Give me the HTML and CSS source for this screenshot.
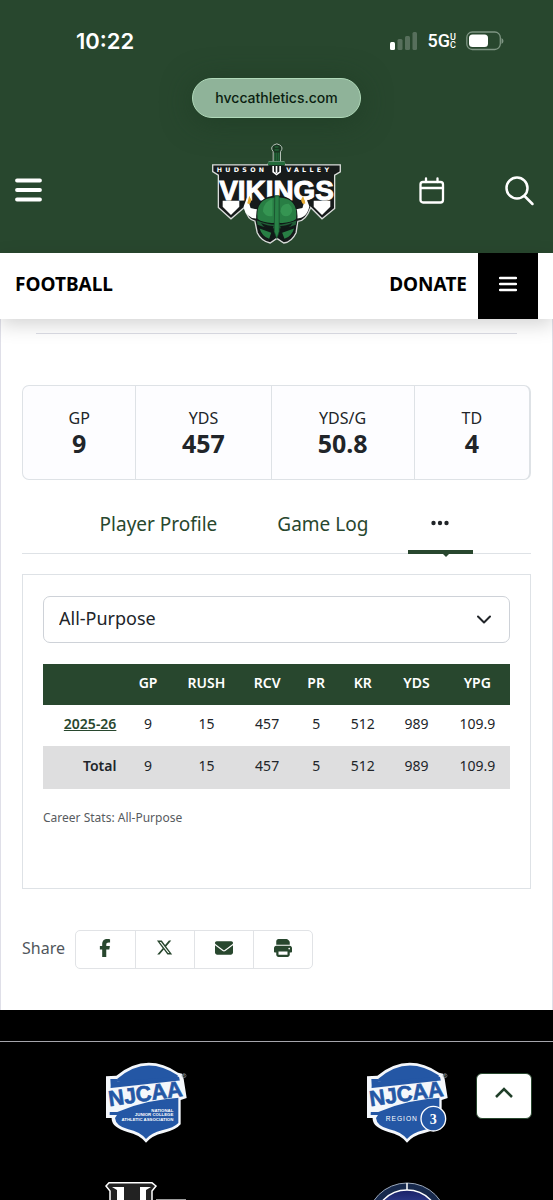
FILE: index.html
```html
<!DOCTYPE html>
<html lang="en">
<head>
<meta charset="utf-8">
<meta name="viewport" content="width=device-width, initial-scale=1">
<title>Football - Hudson Valley Vikings</title>
<link rel="stylesheet" href="styles.css">
</head>
<body>
<header class="site-header">
  <div class="status">
    <span class="time">10:22</span>
    <div class="status-icons">
      <svg width="28" height="18" viewBox="0 0 28 18" fill="#fff"><rect x="0" y="10" width="5" height="8" rx="1.5"/><g opacity=".22"><rect x="7.500" y="7" width="5" height="11" rx="1.500"/><rect x="15" y="4" width="5" height="14" rx="1.500"/><rect x="22.500" y="0" width="4.500" height="18" rx="1.500"/></g></svg>
      <span class="network">5G<span class="uc"><span>U</span><span>C</span></span></span>
      <svg width="38" height="20" viewBox="0 0 38 20"><rect x=".8" y="1" width="33.500" height="17.500" rx="5.500" fill="none" stroke="#7e9583" stroke-width="1.300"/><rect x="3" y="3.500" width="19" height="12.500" rx="3.500" fill="#fff"/><path d="M35.500 7v6q2-.8 2-3t-2-3" fill="#7e9583"/></svg>
    </div>
  </div>
  <div class="address">hvccathletics.com</div>
  <div class="nav">
    <button class="icon-btn" aria-label="Menu"><svg width="28" height="25" viewBox="0 0 28 25"><path d="M2 2.500H25M2 12H25M2 21.500H25" stroke="#fff" stroke-width="3.800" stroke-linecap="round"/></svg></button>
    <a class="logo" href="#" aria-label="Hudson Valley Vikings">
      <svg width="129" height="101" viewBox="36 22 388 304">
        <path d="M220 90V48q-10-12 2-20 9-7 18 0 12 8 2 20V90Z" fill="#183520" stroke="#b9c4bb" stroke-width="3"/>
        <path d="M225 34H236M224 43H237M225 51V76M231 51V76M237 51V76" stroke="#287a43" stroke-width="3"/>
        <path d="M38 88H204L208 79H252L256 88H422V109L405 119V219L367 250L333 216Q318 257 294 258L289 292Q276 320 252 323L231 309L211 323Q184 317 172 292L165 257Q143 254 133 216L93 250L55 216V119L38 108Z" fill="#171b1b" stroke="#d9dcda" stroke-width="4"/>
        <path d="M205 78H255L256 89H204Z" fill="#236b3b"/>
        <text x="50" y="109" class="logo-city">HUDSON</text><text x="259" y="109" class="logo-city">VALLEY</text>
        <path d="M220 91V109L230 117L241 109V91M230 91V112" fill="none" stroke="#fff" stroke-width="5"/>
        <path d="M68 196H118V214L93 239L68 214ZM342 196H392V214L367 239L342 214Z" fill="#fff"/>
        <path d="M142 184L131 213Q138 249 170 249L181 224L152 218ZM318 184L329 213Q321 249 290 249L279 224L308 218Z" fill="#fff"/>
        <text x="230" y="193" text-anchor="middle" class="logo-name">VIKINGS</text>
        <path d="M148 181L142 203Q152 211 154 193ZM310 181L317 203Q307 211 304 193Z" fill="#e9ae34"/>
        <path d="M170 260Q160 183 231 180Q302 183 292 260L283 291L249 317L231 304L211 317L178 291Z" fill="#101817"/>
        <path d="M173 251Q165 188 225 186V262Q194 265 173 251M237 186Q297 188 289 251Q270 265 237 262Z" fill="#287e44"/>
        <path d="M218 190Q190 199 189 228Q202 248 218 241ZM267 205Q243 204 242 228Q250 250 270 239Q286 224 267 205Z" fill="#359552"/>
        <path d="M171 255Q230 280 290 255L288 268Q230 291 173 268Z" fill="#205d36"/>
        <path d="M183 263Q207 273 221 272L218 282Q195 282 183 263M279 263Q255 273 241 272L244 282Q267 282 279 263" fill="#101817"/>
        <path d="M225 181H238V288L231 310L223 288Z" fill="#298247" stroke="#17482a" stroke-width="2"/>
        <path d="M179 279L214 292L208 310Q187 304 179 279M283 279L247 292L254 310Q275 304 283 279Z" fill="#287e44"/>
      </svg>
    </a>
    <div class="nav-actions">
      <button class="icon-btn" aria-label="Calendar"><svg width="26" height="28" viewBox="0 0 26 28" fill="none" stroke="#fff" stroke-width="2.300" stroke-linecap="round"><rect x="1.500" y="5" width="22.500" height="20.500" rx="2.500"/><path d="M7 1.500V5M18.500 1.500V5M2 11H24"/></svg></button>
      <button class="icon-btn" aria-label="Search"><svg width="32" height="30" viewBox="0 0 32 30" fill="none" stroke="#fff" stroke-width="2.500" stroke-linecap="round"><circle cx="12" cy="12" r="10.500"/><path d="M19.500 20L27.500 28"/></svg></button>
    </div>
  </div>
</header>
<nav class="subnav">
  <a href="#" class="sport">FOOTBALL</a>
  <a href="#" class="donate">DONATE</a>
  <button class="sub-menu" aria-label="Football menu"><svg width="18" height="16" viewBox="0 0 18 16"><path d="M1 2H17M1 8H17M1 14H17" stroke="#fff" stroke-width="2.500" stroke-linecap="round"/></svg></button>
</nav>
<main class="content">
  <hr class="divider">
  <dl class="stats">
    <div><dt>GP</dt><dd>9</dd></div>
    <div><dt>YDS</dt><dd>457</dd></div>
    <div><dt>YDS/G</dt><dd>50.8</dd></div>
    <div><dt>TD</dt><dd>4</dd></div>
  </dl>
  <div class="tabs">
    <button>Player Profile</button>
    <button>Game Log</button>
    <button class="more" aria-label="More"><svg width="18" height="6" viewBox="0 0 18 6" fill="#212529"><circle cx="2.500" cy="3" r="2.200"/><circle cx="9" cy="3" r="2.200"/><circle cx="15.500" cy="3" r="2.200"/></svg></button>
  </div>
  <section class="panel">
    <div class="select-wrap">
      <select aria-label="Statistic category"><option>All-Purpose</option></select>
      <svg class="chevron" width="14" height="9" viewBox="0 0 14 9"><path d="M1 1.500L7 7.500L13 1.500" fill="none" stroke="#212529" stroke-width="2" stroke-linecap="round" stroke-linejoin="round"/></svg>
    </div>
    <table>
      <colgroup><col class="c-season"><col class="c-gp"><col class="c-rush"><col class="c-rcv"><col class="c-pr"><col class="c-kr"><col class="c-yds"><col class="c-ypg"></colgroup>
      <thead><tr><td></td><th>GP</th><th>RUSH</th><th>RCV</th><th>PR</th><th>KR</th><th>YDS</th><th>YPG</th></tr></thead>
      <tbody><tr><th><a href="#">2025-26</a></th><td>9</td><td>15</td><td>457</td><td>5</td><td>512</td><td>989</td><td>109.9</td></tr></tbody>
      <tfoot><tr><th>Total</th><td>9</td><td>15</td><td>457</td><td>5</td><td>512</td><td>989</td><td>109.9</td></tr></tfoot>
    </table>
    <p class="note">Career Stats: All-Purpose</p>
  </section>
  <div class="share">
    <span>Share</span>
    <div class="share-links">
      <a href="#" aria-label="Facebook"><svg width="18" height="18" viewBox="0 0 320 512"><path d="M80 299V512H196V299H282L300 202H196V167C196 116 216 96 268 96C284 96 297 97 304 98V10C290 6 255 0 234 0C127 0 80 50 80 159V202H14V299Z"/></svg></a>
      <a href="#" aria-label="X"><svg width="17" height="17" viewBox="0 0 512 512"><path d="M389 48h71L306 224l181 240H345L234 319 107 464H36L202 275 28 48h146l100 133ZM364 422h39L151 88h-42Z"/></svg></a>
      <a href="#" aria-label="Email"><svg width="18" height="18" viewBox="0 0 512 512"><path d="M48 64C22 64 0 86 0 112c0 15 7 29 19 38l218 164c11 8 27 8 38 0l218-164c12-9 19-23 19-38 0-26-22-48-48-48ZM0 176v208c0 35 29 64 64 64h384c35 0 64-29 64-64V176L294 339c-23 18-53 18-76 0Z"/></svg></a>
      <a href="#" aria-label="Print"><svg width="18" height="18" viewBox="0 0 512 512"><path d="M128 0C93 0 64 29 64 64v96h384V93c0-17-7-33-19-45l-29-29C388 7 372 0 355 0ZM64 192c-35 0-64 29-64 64v96c0 18 14 32 32 32h32v64c0 35 29 64 64 64h256c35 0 64-29 64-64v-64h32c18 0 32-14 32-32v-96c0-35-29-64-64-64Zm320 160v96H128v-96Zm48-104a24 24 0 1 1 0 48 24 24 0 1 1 0-48Z"/></svg></a>
    </div>
  </div>
</main>
<footer class="footer">
  <div class="partners">
    <svg width="82" height="81" viewBox="45 33 246 243">
      <g id="shield">
        <path d="M48 76L79 74Q169 2 264 65L276 68L281 84L290 141L272 147V220Q258 237 220 246Q185 254 168 275Q149 251 112 243Q67 230 65 205V201H48Z" fill="#f4f7fb"/>
        <path d="M82 83Q168 9 263 73V91H80Z" fill="#2457a5"/>
        <path d="M61 84H82V91L267 77L279 134L265 139V216Q252 230 216 238Q184 246 168 264Q149 242 115 235Q77 225 75 201L81 192H59L62 103Z" fill="#2457a5"/>
        <path d="M56 112L276 88L284 139Q170 145 82 183H56Z" fill="#f4f7fb"/>
        <text x="167" y="150" text-anchor="middle" transform="rotate(-8 167 135)" class="njcaa">NJCAA</text>
        <circle cx="282" cy="74" r="6" fill="none" stroke="#8b9098" stroke-width="2"/><text x="282" y="77" text-anchor="middle" class="reg">R</text>
      </g>
      <g class="assoc"><text x="250" y="182">NATIONAL</text><text x="250" y="196">JUNIOR COLLEGE</text><text x="250" y="211">ATHLETIC ASSOCIATION</text></g>
    </svg>
    <svg width="82" height="81" viewBox="45 33 246 243">
      <use href="#shield"/>
      <text x="104" y="210" class="region">REGION</text>
      <circle cx="247" cy="203" r="37" fill="#2457a5" stroke="#fff" stroke-width="4"/>
      <text x="247" y="218" text-anchor="middle" class="region-no">3</text>
    </svg>
    <svg width="82" height="81" viewBox="0 0 82 81">
      <path d="M1 4L4 .8H47L51 4L47 9V81H5V9Z" fill="#222" stroke="#fff" stroke-width="1.500"/>
      <path d="M7 5H19V81H12V8ZM35 5H46L41 8V81H35Z" fill="#fff"/>
      <path d="M51 17.500H81" stroke="#9a9a9a"/>
    </svg>
    <svg width="82" height="81" viewBox="0 0 82 81">
      <defs><linearGradient id="seal" x2="0" y2="1"><stop stop-color="#1a2168"/><stop offset=".35" stop-color="#3d50a4"/></linearGradient></defs>
      <circle cx="41" cy="41" r="40" fill="#17294c" stroke="#9ba8ba" stroke-width="1"/>
      <circle cx="41" cy="41" r="33" fill="url(#seal)" stroke="#fff" stroke-width="1.500"/><path d="M41 1V8" stroke="#fff" stroke-width="1.500"/>
    </svg>
  </div>
</footer>
<button class="to-top" aria-label="Back to top"><svg width="18" height="11" viewBox="0 0 18 11"><path d="M1 10L9 2L17 10" fill="none" stroke="#203f29" stroke-width="2.500"/></svg></button>
</body>
</html>
```
FILE: styles.css
```css
* { box-sizing: border-box; }
body {
  margin: 0;
  height: 100vh;
  overflow: hidden;
  background: #fff;
  color: #212529;
  font: 16px/24px "Noto Sans", sans-serif;
}
button { border: 0; background: none; padding: 0; margin: 0; font: inherit; color: inherit; cursor: pointer; }
a { color: inherit; text-decoration: none; }
svg { display: block; }

.site-header { background: #28472e; padding: 26px 0 9px; }
.status { display: flex; justify-content: space-between; align-items: center; height: 30px; padding: 0 49px 0 76px; color: #fff; font-family: Inter, sans-serif; }
.time { font-size: 22px; font-weight: 600; }
.status-icons { display: flex; align-items: center; gap: 10px; }
.network { display: flex; align-items: center; font-size: 18px; font-weight: 500; font-family: Roboto, sans-serif; }
.uc { display: flex; flex-direction: column; font-size: 9px; line-height: 8px; font-weight: 500; }
.address {
  width: 169px; height: 40px; margin: 22px auto 0;
  border: 1px solid #b0d9b9; border-radius: 20px;
  background: #8fb399; color: #0b1e10;
  font: 500 14px/38px Inter, sans-serif; text-align: center;
  box-shadow: 0 4px 30px #1b382299;
}
.nav { display: grid; grid-template-columns: 1fr auto 1fr; align-items: center; padding: 25px 15px 0; }
.nav > .icon-btn { justify-self: start; }
.icon-btn { padding-bottom: 6px; }
.nav-actions { display: flex; align-items: center; justify-content: flex-end; gap: 60px; padding-right: 1px; }
.logo-city { font: 700 19px "DejaVu Sans", sans-serif; fill: #fff; letter-spacing: 10px; }
.logo-name { font: 700 84px "Liberation Sans", sans-serif; fill: #fff; stroke: #fff; stroke-width: 3px; }

.subnav {
  position: relative;
  display: flex; align-items: center; height: 66px; padding: 0 15px;
  background: #fff; color: #000; font-size: 19px; font-weight: 700;
  box-shadow: 0 6px 18px #0000002b;
}
.subnav a { padding-bottom: 4px; }
.sport { flex: 1; }
.donate { margin-right: 11px; }
.sub-menu { display: grid; place-items: center; align-self: stretch; width: 60px; padding-bottom: 4px; background: #000; }

.content { border: 1px solid #dfdfe8; border-width: 0 1px; padding: 14px 21px 41px; }
.divider { margin: 0 14px; border: 0; border-top: 1px solid #dcdde6; }
.stats {
  display: grid; grid-template-columns: 114fr 136fr 144fr 115fr;
  height: 95px; margin: 51px 0 0;
  border: 1px solid #dee2e6; border-right-width: 2px; border-radius: 7px;
  background: #fdfdff; text-align: center;
}
.stats > div { padding-top: 20px; border-right: 1px solid #dee2e6; }
.stats > div:last-child { border-right: 0; }
.stats dt { font-size: 16px; line-height: 24px; }
.stats dd { margin: 0; font-size: 25px; line-height: 26px; font-weight: 700; }

.tabs { display: flex; justify-content: center; height: 74px; border-bottom: 1px solid #dee2e6; color: #28472e; font-size: 19px; }
.tabs button { padding: 15px 30px 0; }
.tabs .more { position: relative; width: 65px; margin: 0 10px; padding: 13px 24px 0 23px; }
.more::before { content: ""; position: absolute; left: 0; right: 0; bottom: -1px; height: 4px; background: #28472e; }
.more::after { content: ""; position: absolute; left: 34px; bottom: -4px; border: 4px solid transparent; border-top-color: #28472e; border-bottom: 0; }

.panel { margin-top: 20px; border: 1px solid #dee2e6; padding: 21px 20px 60px; }
.select-wrap { position: relative; }
select {
  display: block; appearance: none; width: 100%; height: 47px; padding: 0 15px 3px;
  border: 1px solid #ced2d8; border-radius: 7px; background: #fff;
  color: #212529; font: 18px/28px "Noto Sans", sans-serif;
}
.chevron { position: absolute; right: 19px; top: 19px; pointer-events: none; }
table { width: 100%; margin-top: 21px; border-collapse: collapse; table-layout: fixed; font-size: 14px; line-height: 20px; }
.c-season { width: 17%; }
.c-gp { width: 11%; }
.c-rush { width: 14%; }
.c-rcv { width: 12%; }
.c-pr { width: 9%; }
.c-kr { width: 11%; }
.c-yds { width: 12%; }
.c-ypg { width: 14%; }
td, th { height: 41px; padding: 0 0 3px; text-align: center; }
thead { background: #28472e; color: #fff; }
thead th { font-weight: 600; }
tbody th, tfoot th { padding-right: 6px; text-align: right; font-weight: 600; }
tbody a { color: #28472e; text-decoration: underline; }
tfoot { background: #dededf; }
tfoot td, tfoot th { height: 43px; }
.note { margin: 19px 0 0; color: #575b60; font-size: 12px; line-height: 20px; }

.share { display: flex; align-items: center; gap: 10px; margin-top: 41px; color: #51565c; font-size: 16px; }
.share > span { padding-bottom: 3px; }
.share-links { display: flex; height: 39px; border: 1px solid #e1e3e6; border-radius: 5px; fill: #28472e; }
.share-links a { display: grid; place-items: center; width: 59px; padding-bottom: 4px; }
.share-links a + a { border-left: 1px solid #e1e3e6; }

.footer { background: #000; padding-top: 31px; }
.partners { display: grid; grid-template-columns: 1fr 1fr; justify-items: center; row-gap: 39px; padding: 20px 15px; border-top: 1px solid #a5a5ab; }
.njcaa { font: 700 65px "Liberation Sans", sans-serif; fill: #2457a5; stroke: #2457a5; stroke-width: 2px; }
.reg { font: 700 8px "Liberation Sans", sans-serif; fill: #8b9098; }
.assoc { font: 700 13px "Liberation Sans", sans-serif; fill: #fff; text-anchor: end; }
.region { font: 400 20px "Liberation Sans", sans-serif; fill: #fff; letter-spacing: 3px; }
.region-no { font: 700 42px "Liberation Serif", serif; fill: #fff; }
.to-top { position: fixed; right: 21px; bottom: 81px; display: grid; place-items: center; width: 56px; height: 46px; padding-bottom: 7px; border: 1px solid #28472e; border-radius: 6px; background: #fff; }
```
